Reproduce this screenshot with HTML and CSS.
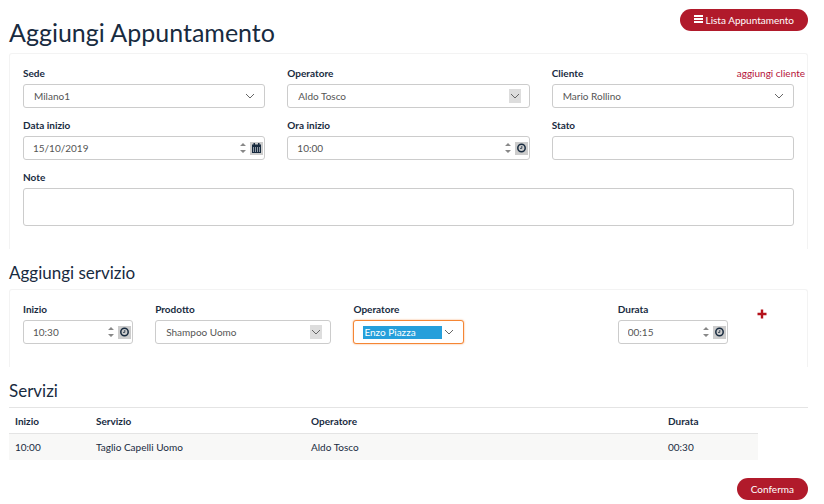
FILE: index.html
```html
<!DOCTYPE html>
<html lang="it">
<head>
<meta charset="utf-8">
<title>Aggiungi Appuntamento</title>
<link rel="stylesheet" href="styles.css">
</head>
<body>
<svg class="sprite" aria-hidden="true">
  <symbol id="chevron" viewBox="0 0 12 14"><path d="M2 5l4 4 4-4" fill="none" stroke="#666" stroke-width="1"/></symbol>
  <symbol id="spin" viewBox="0 0 6 12"><path d="M0 4l3-3 3 3zM0 8l3 3 3-3z" fill="#888"/></symbol>
  <symbol id="clock" viewBox="0 0 13 13"><circle cx="6.5" cy="6" r="3.7" fill="none" stroke="#182b3f" stroke-width="1.5"/><path d="M6.8 4v2.4H5" fill="none" stroke="#182b3f" stroke-width=".8"/></symbol>
  <symbol id="calendar" viewBox="0 0 13 13"><path d="M2 2.500h1.500V1H5v1.500h3V1h1.500v1.500H11V11H2z" fill="#182b3f"/><path d="M3.500 5v5M5.500 5v5M7.500 5v5M9.500 5v5" stroke="#b4bac0" stroke-width=".8"/></symbol>
</svg>
<main class="page">
  <header class="header">
    <h1>Aggiungi Appuntamento</h1>
    <button class="btn" type="button"><svg class="bars" viewBox="0 0 9 10" aria-hidden="true"><path d="M0 0h9v2H0zM0 3h9v2H0zM0 6h9v2H0z" fill="#fff"/></svg>Lista Appuntamento</button>
  </header>

  <form class="panel panel-main">
    <div class="field span4">
      <label for="sede">Sede</label>
      <div class="select"><select id="sede"><option>Milano1</option></select><svg class="arrow"><use href="#chevron"/></svg></div>
    </div>
    <div class="field span4">
      <label for="operatore">Operatore</label>
      <div class="select"><select id="operatore"><option>Aldo Tosco</option></select><svg class="arrow shaded"><use href="#chevron"/></svg></div>
    </div>
    <div class="field span4">
      <div class="label-row"><label for="cliente">Cliente</label><a href="#cliente">aggiungi cliente</a></div>
      <div class="select"><select id="cliente"><option>Mario Rollino</option></select><svg class="arrow"><use href="#chevron"/></svg></div>
    </div>
    <div class="field span4">
      <label for="data">Data inizio</label>
      <div class="control"><input id="data" type="text" value="15/10/2019"><svg class="spin"><use href="#spin"/></svg><button class="pick" type="button" aria-label="Calendario"><svg><use href="#calendar"/></svg></button></div>
    </div>
    <div class="field span4">
      <label for="ora">Ora inizio</label>
      <div class="control"><input id="ora" type="text" value="10:00"><svg class="spin"><use href="#spin"/></svg><button class="pick" type="button" aria-label="Orario"><svg><use href="#clock"/></svg></button></div>
    </div>
    <div class="field span4">
      <label for="stato">Stato</label>
      <div class="control"><input id="stato" type="text"></div>
    </div>
    <div class="field span12">
      <label for="note">Note</label>
      <textarea id="note"></textarea>
    </div>
  </form>

  <h2>Aggiungi servizio</h2>
  <form class="panel panel-service">
    <div class="field span2">
      <label for="inizio">Inizio</label>
      <div class="control"><input id="inizio" type="text" value="10:30"><svg class="spin"><use href="#spin"/></svg><button class="pick" type="button" aria-label="Orario"><svg><use href="#clock"/></svg></button></div>
    </div>
    <div class="field span3">
      <label for="prodotto">Prodotto</label>
      <div class="select"><select id="prodotto"><option>Shampoo Uomo</option></select><svg class="arrow shaded"><use href="#chevron"/></svg></div>
    </div>
    <div class="field span2">
      <label for="operatore2">Operatore</label>
      <div class="select active"><select id="operatore2"><option>Enzo Piazza</option></select><svg class="arrow"><use href="#chevron"/></svg></div>
    </div>
    <div class="field duration">
      <label for="durata">Durata</label>
      <div class="control"><input id="durata" type="text" value="00:15"><svg class="spin"><use href="#spin"/></svg><button class="pick" type="button" aria-label="Durata"><svg><use href="#clock"/></svg></button></div>
    </div>
    <button class="add" type="button" aria-label="Aggiungi"><svg viewBox="0 0 10 10"><path d="M3.8 0.5h2.4v3.3h3.3v2.4H6.2v3.3H3.8V6.2H.5V3.8h3.3z" fill="#b5121b"/></svg></button>
  </form>

  <h2>Servizi</h2>
  <section class="services">
    <table>
      <thead><tr><th class="c-start">Inizio</th><th class="c-service">Servizio</th><th>Operatore</th><th class="c-duration">Durata</th></tr></thead>
      <tbody><tr><td>10:00</td><td>Taglio Capelli Uomo</td><td>Aldo Tosco</td><td>00:30</td></tr></tbody>
    </table>
  </section>
  <footer class="footer"><button class="btn" type="button">Conferma</button></footer>
</main>
</body>
</html>
```
FILE: styles.css
```css
* { box-sizing: border-box; }
body {
  margin: 0;
  background: #fff;
  color: #182b3f;
  font: 10px/14px Lato, sans-serif;
}
.sprite { position: absolute; width: 0; height: 0; }
.page { padding: 9px 16px 0 9px; }
button, input, select, textarea { font: inherit; }
button { border: 0; padding: 0; cursor: pointer; }
a { color: #b5123a; text-decoration: none; }

.header {
  display: flex;
  justify-content: space-between;
  align-items: flex-start;
  height: 44px;
}
h1 { margin: 7px 0 0; font-size: 25px; line-height: 32px; font-weight: 400; }
h2 { margin: 0; font-size: 17px; line-height: 20px; font-weight: 400; padding: 14px 0 6px; }

.btn {
  display: inline-flex;
  align-items: center;
  height: 22px;
  padding: 0 14px;
  border-radius: 11px;
  background: #b11a2b;
  color: #fff;
}
.bars { width: 9px; height: 10px; margin-right: 3px; }

.panel {
  display: grid;
  grid-template-columns: repeat(12, 1fr);
  gap: 10px 22px;
  padding: 12px 13px 23px;
  border: 1px solid #f3f3f3;
  border-bottom: 0;
  border-radius: 3px 3px 0 0;
}
.span2 { grid-column: span 2; }
.span3 { grid-column: span 3; }
.span4 { grid-column: span 4; }
.span12 { grid-column: span 12; }
.duration { grid-column: 10 / span 2; }

.field { display: flex; flex-direction: column; gap: 4px; min-width: 0; }
label { font-weight: 700; }
.label-row { display: flex; justify-content: space-between; margin-right: -11px; }

.select, .control {
  display: flex;
  align-items: center;
  height: 24px;
  border: 1px solid #ccc;
  border-radius: 3px;
  background: #fff;
  position: relative;
}
select, input {
  flex: 1;
  min-width: 0;
  height: 100%;
  border: 0;
  outline: 0;
  background: transparent;
  color: #555;
}
select { appearance: none; padding: 0 24px 0 10px; }
input { padding: 0 0 0 9px; }
.arrow {
  position: absolute;
  right: 8px;
  width: 12px;
  height: 14px;
  pointer-events: none;
}
.shaded { background: #ddd; }
.spin { width: 6px; height: 12px; margin-right: 4px; }
.pick { width: 13px; height: 13px; margin-right: 1px; background: #ccc; }
.pick svg { display: block; width: 13px; height: 13px; }
.active { border-color: #f58634; box-shadow: 0 0 2px #f5a56a; }
.active select {
  height: 13px;
  margin: 0 21px 0 9px;
  padding: 0 0 0 1px;
  background: #259fdb;
  color: #fff;
  line-height: 13px;
}
textarea {
  display: block;
  width: 100%;
  height: 38px;
  border: 1px solid #ccc;
  border-radius: 3px;
  resize: none;
}
.add { grid-column: 12; justify-self: start; align-self: start; margin: 7px; background: none; }
.add svg { display: block; width: 10px; height: 10px; }

.services { border-top: 1px solid #e4e4e4; padding-right: 50px; }
table { width: 100%; border-collapse: separate; border-spacing: 0; table-layout: fixed; }
th, td { padding: 6px; text-align: left; }
th { padding-bottom: 5px; font-weight: 700; border-bottom: 1px solid #e4e4e4; }
td { background: #f8f8f7; }
.c-start { width: 81px; }
.c-service { width: 215px; }
.c-duration { width: 96px; }
.footer { display: flex; justify-content: flex-end; margin-top: 18px; }
```
